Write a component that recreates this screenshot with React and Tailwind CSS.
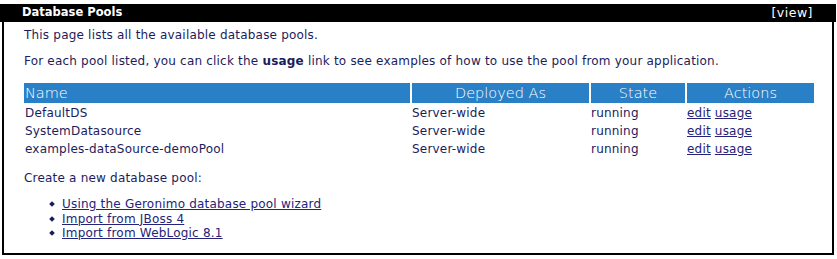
import React from "react";

const pools = [
  { name: "DefaultDS", deployed: "Server-wide", state: "running" },
  { name: "SystemDatasource", deployed: "Server-wide", state: "running" },
  { name: "examples-dataSource-demoPool", deployed: "Server-wide", state: "running" },
];

const links = [
  "Using the Geronimo database pool wizard",
  "Import from JBoss 4",
  "Import from WebLogic 8.1",
];

export default function App() {
  return (
    <div className="w-[837px] h-[259px] bg-white pt-[4px] font-['DejaVu_Sans',Verdana,sans-serif] text-[12px] tracking-[0.2px] text-[#1c1c5c]">
      <div className="w-[836px]">
        {/* Title bar */}
        <div className="h-[18px] bg-black text-white flex items-center justify-between pl-[22px] pr-[23px]">
          <span className="font-bold text-[11.5px] tracking-normal">Database Pools</span>
          <span className="text-[12.5px] tracking-[0.5px]">[view]</span>
        </div>

        {/* Body */}
        <div className="mx-[2px] h-[233px] border-x-2 border-b-2 border-black pt-[6px] pl-[20px] pr-[19px]">
          <p className="leading-[15px]">This page lists all the available database pools.</p>
          <p className="mt-[11px] leading-[15px]">
            For each pool listed, you can click the <b>usage</b> link to see examples of how to use the pool from your application.
          </p>

          <table className="mt-[14px] w-[790px] border-separate border-spacing-0">
            <thead>
              <tr className="h-[20px] text-white text-[14.5px] tracking-normal">
                <th className="bg-[#2a80c6] text-left font-extralight px-[1px] w-[386px] leading-[20px]">Name</th>
                <th className="bg-[#2a80c6] font-extralight border-l-2 border-white w-[179px] leading-[20px]">Deployed As</th>
                <th className="bg-[#2a80c6] font-extralight border-l-2 border-white w-[96px] leading-[20px]">State</th>
                <th className="bg-[#2a80c6] font-extralight border-l-2 border-white leading-[20px]">Actions</th>
              </tr>
            </thead>
            <tbody>
              {pools.map((p, i) => (
                <tr key={p.name} className={i === 0 ? "h-[19px] align-bottom" : "h-[18px]"}>
                  <td className="px-[1px] leading-[18px]">{p.name}</td>
                  <td className="pl-[2px] leading-[18px]">{p.deployed}</td>
                  <td className="pl-[2px] leading-[18px]">{p.state}</td>
                  <td className="pl-[2px] leading-[18px]">
                    <a href="#" className="underline text-[#23237a]">edit</a>{" "}
                    <a href="#" className="underline text-[#23237a]">usage</a>
                  </td>
                </tr>
              ))}
            </tbody>
          </table>

          <p className="mt-[13px] leading-[15px]">Create a new database pool:</p>
          <ul className="mt-[11px] pl-[26px] flex flex-col">
            {links.map((l) => (
              <li key={l} className="flex items-center leading-[14.5px]">
                <span className="w-[4px] h-[4px] bg-[#1c1c5c] rotate-45 mr-[8px]" />
                <a href="#" className="underline text-[#23237a]">{l}</a>
              </li>
            ))}
          </ul>
        </div>
      </div>
    </div>
  );
}
